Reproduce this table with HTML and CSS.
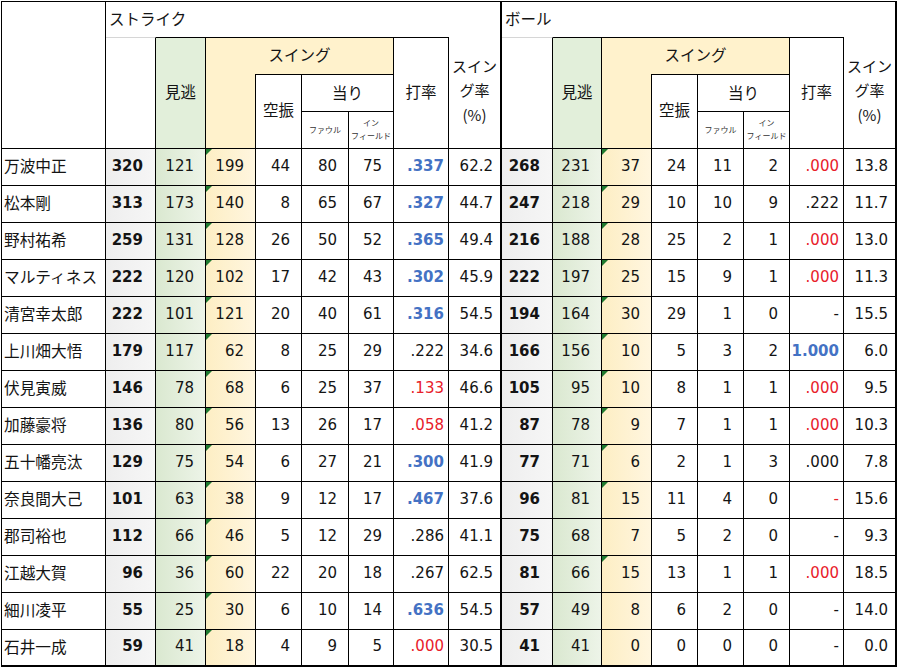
FILE: index.html
```html
<!DOCTYPE html>
<html lang="ja">
<head>
<meta charset="utf-8">
<title>ストライク / ボール</title>
<link rel="stylesheet" href="styles.css">
</head>
<body>
<div class="sheet">
  <div class="h h-name"></div>
  <div class="h h-grp h-strike">ストライク</div>
  <div class="h h-grp h-ball">ボール</div>

  <div class="h h-tot s-c2"></div>
  <div class="h h-mi s-c3">見逃</div>
  <div class="h h-swing s-swing">スイング</div>
  <div class="h h-swcol s-c4"></div>
  <div class="h h-k s-c5">空振</div>
  <div class="h h-atari s-atari">当り</div>
  <div class="h h-sub s-c6">ファウル</div>
  <div class="h h-sub s-c7"><span>イン<br>フィールド</span></div>
  <div class="h h-k h-full s-c8">打率</div>
  <div class="h h-rate h-full s-c9 sep">スイン<br>グ率<br>(%)</div>

  <div class="h h-tot b-c10"></div>
  <div class="h h-mi b-c11">見逃</div>
  <div class="h h-swing b-swing">スイング</div>
  <div class="h h-swcol b-c12"></div>
  <div class="h h-k b-c13">空振</div>
  <div class="h h-atari b-atari">当り</div>
  <div class="h h-sub b-c14">ファウル</div>
  <div class="h h-sub b-c15"><span>イン<br>フィールド</span></div>
  <div class="h h-k h-full b-c16">打率</div>
  <div class="h h-rate h-full b-c17 end">スイン<br>グ率<br>(%)</div>

  <!-- rows -->
  <div class="c nm">万波中正</div><div class="c tot">320</div><div class="c mi">121</div><div class="c sw mk">199</div><div class="c n">44</div><div class="c n">80</div><div class="c n">75</div><div class="c avg hi">.337</div><div class="c pct sep">62.2</div><div class="c tot">268</div><div class="c mi">231</div><div class="c sw mk">37</div><div class="c n">24</div><div class="c n">11</div><div class="c n">2</div><div class="c avg lo">.000</div><div class="c pct end">13.8</div>

  <div class="c nm">松本剛</div><div class="c tot">313</div><div class="c mi">173</div><div class="c sw mk">140</div><div class="c n">8</div><div class="c n">65</div><div class="c n">67</div><div class="c avg hi">.327</div><div class="c pct sep">44.7</div><div class="c tot">247</div><div class="c mi">218</div><div class="c sw mk">29</div><div class="c n">10</div><div class="c n">10</div><div class="c n">9</div><div class="c avg">.222</div><div class="c pct end">11.7</div>

  <div class="c nm">野村祐希</div><div class="c tot">259</div><div class="c mi">131</div><div class="c sw mk">128</div><div class="c n">26</div><div class="c n">50</div><div class="c n">52</div><div class="c avg hi">.365</div><div class="c pct sep">49.4</div><div class="c tot">216</div><div class="c mi">188</div><div class="c sw mk">28</div><div class="c n">25</div><div class="c n">2</div><div class="c n">1</div><div class="c avg lo">.000</div><div class="c pct end">13.0</div>

  <div class="c nm">マルティネス</div><div class="c tot">222</div><div class="c mi">120</div><div class="c sw mk">102</div><div class="c n">17</div><div class="c n">42</div><div class="c n">43</div><div class="c avg hi">.302</div><div class="c pct sep">45.9</div><div class="c tot">222</div><div class="c mi">197</div><div class="c sw mk">25</div><div class="c n">15</div><div class="c n">9</div><div class="c n">1</div><div class="c avg lo">.000</div><div class="c pct end">11.3</div>

  <div class="c nm">清宮幸太郎</div><div class="c tot">222</div><div class="c mi">101</div><div class="c sw mk">121</div><div class="c n">20</div><div class="c n">40</div><div class="c n">61</div><div class="c avg hi">.316</div><div class="c pct sep">54.5</div><div class="c tot">194</div><div class="c mi">164</div><div class="c sw mk">30</div><div class="c n">29</div><div class="c n">1</div><div class="c n">0</div><div class="c avg">-</div><div class="c pct end">15.5</div>

  <div class="c nm">上川畑大悟</div><div class="c tot">179</div><div class="c mi">117</div><div class="c sw mk">62</div><div class="c n">8</div><div class="c n">25</div><div class="c n">29</div><div class="c avg">.222</div><div class="c pct sep">34.6</div><div class="c tot">166</div><div class="c mi">156</div><div class="c sw mk">10</div><div class="c n">5</div><div class="c n">3</div><div class="c n">2</div><div class="c avg hi">1.000</div><div class="c pct end">6.0</div>

  <div class="c nm">伏見寅威</div><div class="c tot">146</div><div class="c mi">78</div><div class="c sw mk">68</div><div class="c n">6</div><div class="c n">25</div><div class="c n">37</div><div class="c avg lo">.133</div><div class="c pct sep">46.6</div><div class="c tot">105</div><div class="c mi">95</div><div class="c sw mk">10</div><div class="c n">8</div><div class="c n">1</div><div class="c n">1</div><div class="c avg lo">.000</div><div class="c pct end">9.5</div>

  <div class="c nm">加藤豪将</div><div class="c tot">136</div><div class="c mi">80</div><div class="c sw mk">56</div><div class="c n">13</div><div class="c n">26</div><div class="c n">17</div><div class="c avg lo">.058</div><div class="c pct sep">41.2</div><div class="c tot">87</div><div class="c mi">78</div><div class="c sw mk">9</div><div class="c n">7</div><div class="c n">1</div><div class="c n">1</div><div class="c avg lo">.000</div><div class="c pct end">10.3</div>

  <div class="c nm">五十幡亮汰</div><div class="c tot">129</div><div class="c mi">75</div><div class="c sw mk">54</div><div class="c n">6</div><div class="c n">27</div><div class="c n">21</div><div class="c avg hi">.300</div><div class="c pct sep">41.9</div><div class="c tot">77</div><div class="c mi">71</div><div class="c sw mk">6</div><div class="c n">2</div><div class="c n">1</div><div class="c n">3</div><div class="c avg">.000</div><div class="c pct end">7.8</div>

  <div class="c nm">奈良間大己</div><div class="c tot">101</div><div class="c mi">63</div><div class="c sw mk">38</div><div class="c n">9</div><div class="c n">12</div><div class="c n">17</div><div class="c avg hi">.467</div><div class="c pct sep">37.6</div><div class="c tot">96</div><div class="c mi">81</div><div class="c sw mk">15</div><div class="c n">11</div><div class="c n">4</div><div class="c n">0</div><div class="c avg lo">-</div><div class="c pct end">15.6</div>

  <div class="c nm">郡司裕也</div><div class="c tot">112</div><div class="c mi">66</div><div class="c sw mk">46</div><div class="c n">5</div><div class="c n">12</div><div class="c n">29</div><div class="c avg">.286</div><div class="c pct sep">41.1</div><div class="c tot">75</div><div class="c mi">68</div><div class="c sw">7</div><div class="c n">5</div><div class="c n">2</div><div class="c n">0</div><div class="c avg">-</div><div class="c pct end">9.3</div>

  <div class="c nm">江越大賀</div><div class="c tot">96</div><div class="c mi">36</div><div class="c sw mk">60</div><div class="c n">22</div><div class="c n">20</div><div class="c n">18</div><div class="c avg">.267</div><div class="c pct sep">62.5</div><div class="c tot">81</div><div class="c mi">66</div><div class="c sw mk">15</div><div class="c n">13</div><div class="c n">1</div><div class="c n">1</div><div class="c avg lo">.000</div><div class="c pct end">18.5</div>

  <div class="c nm">細川凌平</div><div class="c tot">55</div><div class="c mi">25</div><div class="c sw mk">30</div><div class="c n">6</div><div class="c n">10</div><div class="c n">14</div><div class="c avg hi">.636</div><div class="c pct sep">54.5</div><div class="c tot">57</div><div class="c mi">49</div><div class="c sw">8</div><div class="c n">6</div><div class="c n">2</div><div class="c n">0</div><div class="c avg">-</div><div class="c pct end">14.0</div>

  <div class="c nm">石井一成</div><div class="c tot">59</div><div class="c mi">41</div><div class="c sw mk">18</div><div class="c n">4</div><div class="c n">9</div><div class="c n">5</div><div class="c avg lo">.000</div><div class="c pct sep">30.5</div><div class="c tot">41</div><div class="c mi">41</div><div class="c sw">0</div><div class="c n">0</div><div class="c n">0</div><div class="c n">0</div><div class="c avg">-</div><div class="c pct end">0.0</div>
</div>
</body>
</html>
```

FILE: styles.css
```css
html, body {
  margin: 0;
  padding: 0;
  background: #ffffff;
}

body {
  font-family: "DejaVu Sans", "Noto Sans CJK JP", sans-serif;
  font-size: 15px;
  color: #141414;
}

.sheet {
  margin: 1px 0 0 1px;
  display: grid;
  grid-template-columns: 104px 50px 50px 50px 46px 47px 45px 55px 53px 51px 49px 50px 46px 46px 46px 54px 53px;
  grid-template-rows: 35px 37px 38px 37px repeat(14, 37px);
  border-left: 1px solid #000;
  border-top: 1px solid #000;
  width: 895px;
}

.sheet > div {
  box-sizing: border-box;
  border-right: 1px solid #000;
  border-bottom: 1px solid #000;
  display: flex;
  align-items: center;
  min-width: 0;
}

/* ---------- header ---------- */
.h {
  font-family: "Noto Sans CJK JP", sans-serif;
  font-size: 15.5px;
  justify-content: center;
  text-align: center;
  background: #fff;
}

.h-name { grid-column: 1; grid-row: 1 / 5; }

.h-grp {
  justify-content: flex-start;
  padding: 0 0 3px 3px;
  border-bottom: none !important;
}
.h-strike { grid-column: 2 / 10; grid-row: 1; border-right: 2px solid #000 !important; }
.h-ball { grid-column: 10 / 18; grid-row: 1; border-right: 2px solid #000 !important; }

.h-tot { grid-row: 2 / 5; border-top: 1px solid #d6d6d6; }
.h-mi { grid-row: 2 / 5; border-top: 1px solid #000; background: #e2efda; padding-bottom: 4px; }
.h-swing {
  grid-row: 2;
  border-top: 1px solid #000;
  border-bottom: none !important;
  background: #fff2cc;
  padding-bottom: 4px;
}
.h-swcol { grid-row: 3 / 5; background: #fff2cc; }
.h-k { grid-row: 3 / 5; border-top: 1px solid #000; padding-bottom: 6px; }
.h-full { grid-row: 2 / 5; padding-bottom: 4px; }
.h-atari { grid-row: 3; padding-bottom: 3px; border-top: 1px solid #000; }
.h-sub {
  grid-row: 4;
  font-size: 8px;
  line-height: 13px;
  color: #333;
  padding-bottom: 2px;
}
.h-rate {
  font-size: 15px;
  line-height: 24.5px;
  padding-bottom: 4px;
}

.s-c2 { grid-column: 2; }
.s-c3 { grid-column: 3; }
.s-swing { grid-column: 4 / 8; }
.s-c4 { grid-column: 4; }
.s-c5 { grid-column: 5; }
.s-atari { grid-column: 6 / 8; }
.s-c6 { grid-column: 6; }
.s-c7 { grid-column: 7; }
.s-c8 { grid-column: 8; }
.s-c9 { grid-column: 9; }

.b-c10 { grid-column: 10; }
.b-c11 { grid-column: 11; }
.b-swing { grid-column: 12 / 16; }
.b-c12 { grid-column: 12; }
.b-c13 { grid-column: 13; }
.b-atari { grid-column: 14 / 16; }
.b-c14 { grid-column: 14; }
.b-c15 { grid-column: 15; }
.b-c16 { grid-column: 16; }
.b-c17 { grid-column: 17; }

/* ---------- data cells ---------- */
.c {
  justify-content: flex-end;
  padding: 0 11px 3px 0;
  white-space: nowrap;
}

.nm {
  font-family: "Noto Sans CJK JP", sans-serif;
  font-size: 15.7px;
  justify-content: flex-start;
  padding: 0 0 3px 2px;
}

.tot {
  font-weight: bold;
  padding-right: 12px;
  background: linear-gradient(to right, #eeeeee, #f6f6f6);
}

.mi {
  padding-right: 11px;
  background: linear-gradient(to right, #dae8d0, #edf4e8);
}

.sw {
  position: relative;
  padding-right: 11px;
  background: linear-gradient(to right, #fdeec4, #fff6df);
}

.mk::before {
  content: "";
  position: absolute;
  top: 0;
  left: 0;
  width: 0;
  height: 0;
  border-top: 6px solid #1f7a30;
  border-right: 6px solid transparent;
}

.avg { padding-right: 4px; }
.pct { padding-right: 7px; }

.hi { color: #4472c4; font-weight: bold; }
.lo { color: #e8202a; }

.sep { border-right: 2px solid #000 !important; }
.end { border-right: 2px solid #000 !important; }

.sheet > .c:nth-last-child(-n+17) {
  border-bottom: 2px solid #000;
}
```
